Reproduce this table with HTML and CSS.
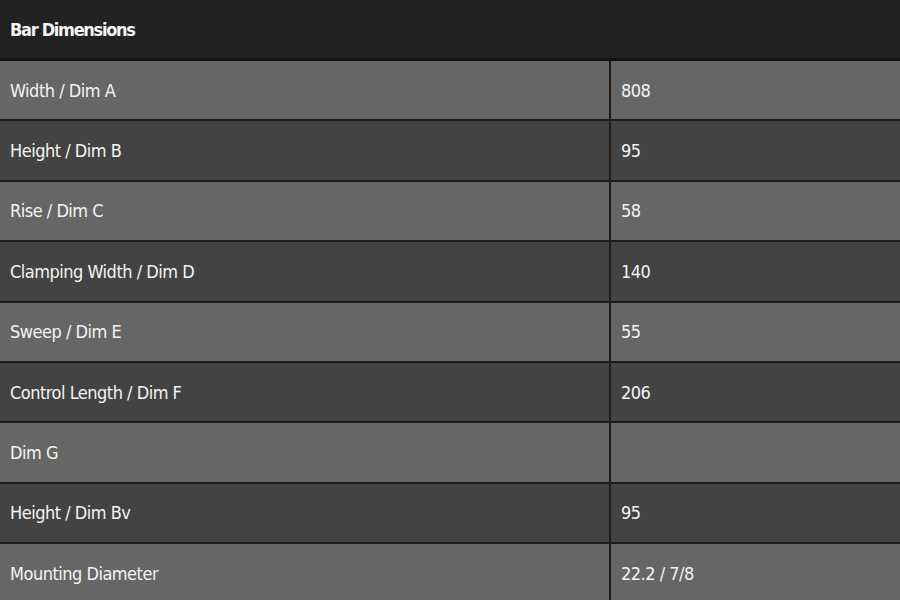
FILE: index.html
```
<!DOCTYPE html>
<html>
<head>
<meta charset="utf-8">
<link rel="stylesheet" href="styles.css">
</head>
<body>
<div class="spec">
  <div class="spec-head">Bar Dimensions</div>
  <div class="row light"><div class="label">Width / Dim A</div><div class="value">808</div></div>
  <div class="row dark"><div class="label">Height / Dim B</div><div class="value">95</div></div>
  <div class="row light"><div class="label">Rise / Dim C</div><div class="value">58</div></div>
  <div class="row dark"><div class="label">Clamping Width / Dim D</div><div class="value">140</div></div>
  <div class="row light"><div class="label">Sweep / Dim E</div><div class="value">55</div></div>
  <div class="row dark"><div class="label">Control Length / Dim F</div><div class="value">206</div></div>
  <div class="row light"><div class="label">Dim G</div><div class="value"></div></div>
  <div class="row dark"><div class="label">Height / Dim Bv</div><div class="value">95</div></div>
  <div class="row light"><div class="label">Mounting Diameter</div><div class="value">22.2 / 7/8</div></div>
</div>
</body>
</html>
```
FILE: styles.css
```
html, body {
  margin: 0;
  padding: 0;
  background: #222;
  overflow: hidden;
}
.spec {
  width: 900px;
  font-family: "DejaVu Sans Condensed", "Liberation Sans", sans-serif;
  color: #f4f4f4;
  font-size: 18px;
  letter-spacing: -0.5px;
}
.spec-head {
  height: 58px;
  background: #222;
  border-bottom: 3px solid #111;
  display: flex;
  align-items: center;
  padding-left: 10px;
  font-weight: bold;
  letter-spacing: -1.3px;
  box-sizing: content-box;
}
.row {
  display: grid;
  grid-template-columns: 609px 1fr;
  height: 58.4px;
  border-bottom: 2px solid #1c1c1c;
}
.row.light { background: #666; }
.row.dark { background: #434343; }
.label, .value {
  display: flex;
  align-items: center;
  padding-left: 10px;
}
.value {
  border-left: 2px solid #1c1c1c;
}
```
